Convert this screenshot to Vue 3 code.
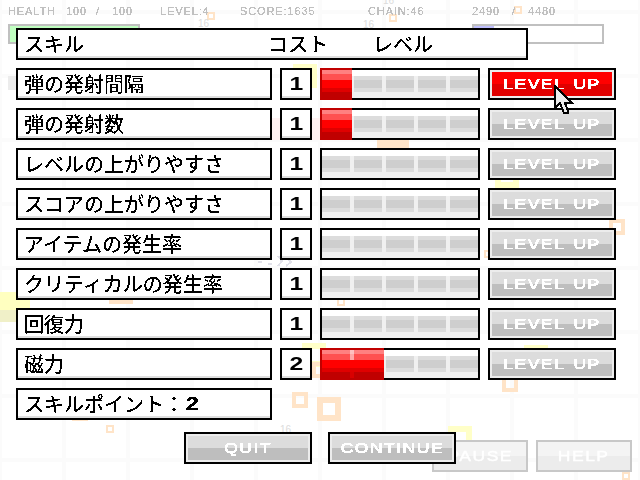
<script setup>
const skills = [
  { name: '弾の発射間隔', cost: 1, level: 1, hover: true },
  { name: '弾の発射数', cost: 1, level: 1 },
  { name: 'レベルの上がりやすさ', cost: 1, level: 0 },
  { name: 'スコアの上がりやすさ', cost: 1, level: 0 },
  { name: 'アイテムの発生率', cost: 1, level: 0 },
  { name: 'クリティカルの発生率', cost: 1, level: 0 },
  { name: '回復力', cost: 1, level: 0 },
  { name: '磁力', cost: 2, level: 2 },
];

// falling items behind the menu: x, y, size, colour
const items = [
  [207, 12, 8, 'o'], [389, 14, 8, 'o'], [514, 6, 8, 'o'],
  [293, 64, 24, 'y'], [377, 116, 32, 'o'], [609, 219, 16, 'o'],
  [484, 250, 8, 'o'], [337, 298, 8, 'o'], [495, 164, 24, 'y'],
  [109, 280, 24, 'o'], [292, 392, 16, 'o'],
  [317, 397, 24, 'o'], [72, 405, 16, 'o'], [106, 425, 8, 'o'],
  [448, 426, 24, 'y'], [622, 472, 8, 'o'], [502, 376, 16, 'o'],
  [302, 343, 24, 'y'], [524, 345, 24, 'y'], [312, 362, 16, 'o'],
];

// score popups left by the shots
const popups = [[280, 425], [363, 20], [383, -4], [198, 19]];

function itemStyle(item) {
  const colors = { o: '#ffe4c8', y: '#ffffc8' };
  return {
    left: item[0] + 'px',
    top: item[1] + 'px',
    width: item[2] + 'px',
    height: item[2] + 'px',
    borderColor: colors[item[3]],
    borderWidth: Math.round(item[2] / 4) + 'px',
  };
}
</script>

<template>
  <div class="screen">
    <svg class="defs" width="0" height="0" aria-hidden="true">
      <filter id="hard" color-interpolation-filters="sRGB" x="0" y="0" width="100%" height="100%">
        <feComponentTransfer>
          <feFuncA type="discrete" tableValues="0 0 1 1 1 1" />
        </feComponentTransfer>
      </filter>
    </svg>

    <!-- the game, paused behind the menu -->
    <div class="game">
      <div v-for="(item, i) in items" :key="i" class="item" :style="itemStyle(item)" />
      <div class="blob" />
      <div class="sprite" />
      <svg class="spark" width="44" height="14" viewBox="0 0 44 14" shape-rendering="crispEdges">
        <path d="M0 8h4M10 10h4M20 2l4 5-4 5M28 3l5 5-5 4M38 2h5v4" fill="none" stroke="#e2e2ea" stroke-width="2" />
      </svg>
      <div class="smear" />
      <span
        v-for="(p, i) in popups"
        :key="'p' + i"
        class="popup"
        :style="{ left: p[0] + 'px', top: p[1] + 'px' }"
      >16</span>
      <div class="hud pixel">
        <span class="hud-a"><i>HEALTH</i></span>
        <span class="hud-b"><i>100</i></span>
        <span class="hud-c"><i>/</i></span>
        <span class="hud-d"><i>100</i></span>
        <span class="hud-e"><i>LEVEL:4</i></span>
        <span class="hud-f"><i>SCORE:1635</i></span>
        <span class="hud-g"><i>CHAIN:46</i></span>
        <span class="hud-h"><i>2490</i></span>
        <span class="hud-c"><i>/</i></span>
        <span class="hud-i"><i>4480</i></span>
      </div>
      <div class="meters">
        <div class="meter"><div class="meter-fill green" /></div>
        <div class="meter"><div class="meter-fill blue" /></div>
      </div>
      <div class="game-buttons">
        <div class="game-btn pixel"><i>PAUSE</i></div>
        <div class="game-btn pixel"><i>HELP</i></div>
      </div>
    </div>

    <div class="menu">
      <div class="panel head">
        <span class="jp h1">スキル</span>
        <span class="jp h2">コスト</span>
        <span class="jp">レベル</span>
      </div>

      <div v-for="skill in skills" :key="skill.name" class="row">
        <div class="panel label"><span class="jp">{{ skill.name }}</span></div>
        <div class="panel cost pixel"><i>{{ skill.cost }}</i></div>
        <div class="bar">
          <div class="track">
            <div v-for="n in 5" :key="n" class="seg" />
          </div>
          <div v-if="skill.level" class="fill" :style="{ width: skill.level * 32 + 'px' }">
            <div v-for="n in skill.level - 1" :key="n" class="sep" :style="{ left: n * 32 - 2 + 'px' }" />
          </div>
        </div>
        <button class="btn" :class="{ hot: skill.hover }">
          <span class="face pixel"><i>LEVEL UP</i></span>
        </button>
      </div>

      <div class="panel label">
        <span class="jp">スキルポイント：</span><span class="pixel points"><i>2</i></span>
      </div>

      <div class="footer">
        <button class="btn"><span class="face pixel"><i>QUIT</i></span></button>
        <button class="btn"><span class="face pixel"><i>CONTINUE</i></span></button>
      </div>
    </div>

    <svg class="cursor" width="20" height="31" viewBox="0 0 20 31" shape-rendering="crispEdges">
      <path d="M1 1V23L6 18L10 28H14V26L11 18H18Z" fill="#ececec" stroke="#000" stroke-width="2" />
    </svg>
  </div>
</template>

<style>
html, body {
  background: #fff;
  overflow: hidden;
}
</style>

<style scoped>
.screen {
  position: relative;
  width: 640px;
  height: 480px;
  overflow: hidden;
  background-color: #fff;
  background-image:
    linear-gradient(90deg, #fbfbfb 4px, transparent 4px),
    linear-gradient(#fbfbfb 4px, transparent 4px);
  background-size: 64px 64px;
  background-position: -2px 0, 0 10px;
}
.defs {
  position: absolute;
}
.game {
  position: absolute;
  inset: 0;
}
.item {
  position: absolute;
  box-sizing: border-box;
  border-style: solid;
}
.blob {
  position: absolute;
  left: 0;
  top: 292px;
  width: 30px;
  height: 30px;
  background: linear-gradient(#ffffc0 60%, #f0f0c8 60%);
}
.sprite {
  position: absolute;
  left: 8px;
  top: 76px;
  width: 8px;
  height: 14px;
  background: #ececec;
}
.spark {
  position: absolute;
  left: 258px;
  top: 254px;
}
.smear {
  position: absolute;
  left: 272px;
  top: 118px;
  width: 48px;
  height: 22px;
  background: #fff2f2;
}
.popup {
  position: absolute;
  font-family: "Liberation Sans", sans-serif;
  font-size: 10px;
  line-height: 10px;
  color: #dcdcdc;
}
.pixel {
  filter: url(#hard);
  font-family: "Liberation Sans", sans-serif;
}
.pixel i {
  display: inline-block;
  font-style: normal;
  white-space: pre;
}

.hud {
  display: flex;
  padding: 5px 0 0 8px;
  font-size: 10px;
  line-height: 14px;
  color: #c0c0c0;
}
.hud i {
  letter-spacing: 0.8px;
  transform: scaleX(1.1);
  transform-origin: left;
}
.hud-a { width: 58px; }
.hud-b { width: 30px; }
.hud-c { width: 16px; }
.hud-d { width: 48px; }
.hud-e { width: 80px; }
.hud-f { width: 128px; }
.hud-g { width: 104px; }
.hud-h { width: 40px; }

.meters {
  display: flex;
  justify-content: space-between;
  padding: 5px 36px 0 8px;
}
.meter {
  box-sizing: border-box;
  width: 132px;
  height: 20px;
  border: 2px solid #c0c0c0;
  background: #fff;
}
.meter-fill {
  height: 100%;
}
.green {
  background: #c0ffc0;
}
.blue {
  width: 20px;
  height: 3px;
  background: #c0c0ff;
}
.game-buttons {
  position: absolute;
  left: 432px;
  top: 440px;
  display: flex;
  gap: 8px;
}
.game-btn {
  box-sizing: border-box;
  width: 96px;
  height: 32px;
  border: 2px solid #c8c8c8;
  background: linear-gradient(#f4f4f4 50%, #ececec 50%);
  display: flex;
  align-items: center;
  justify-content: center;
  font-size: 14px;
  color: #fff;
}
.game-btn i {
  letter-spacing: 1.2px;
  transform: scaleX(1.25);
  -webkit-text-stroke: 0.4px #fff;
}

.menu {
  position: relative;
  display: flex;
  flex-direction: column;
  gap: 8px;
  padding: 28px 0 0 16px;
}
.row {
  display: flex;
  gap: 8px;
}
.panel {
  box-sizing: border-box;
  height: 32px;
  border: 2px solid #000;
  background: #fff;
  box-shadow: inset 0 -2px 0 #e0e0e0;
  display: flex;
  align-items: center;
}
.jp {
  font-family: "Noto Sans CJK JP", sans-serif;
  font-size: 20px;
  line-height: 28px;
  color: #000;
  white-space: nowrap;
  filter: url(#hard);
}
.head {
  width: 512px;
  padding-left: 6px;
}
.h1 {
  width: 244px;
}
.h2 {
  width: 105px;
}
.label {
  width: 256px;
  padding-left: 6px;
}
.cost {
  width: 32px;
  justify-content: center;
  font-size: 19px;
  font-weight: bold;
  color: #000;
}
.cost i {
  transform: scaleX(1.3);
}
.points {
  font-size: 19px;
  font-weight: bold;
  margin-left: 3px;
}
.points i {
  transform: scaleX(1.3);
}

.bar {
  position: relative;
  box-sizing: border-box;
  width: 160px;
  height: 32px;
  border: 2px solid #000;
  background: linear-gradient(#fff 6px, #f0f0f0 6px);
}
.track {
  display: flex;
  gap: 4px;
  margin-top: 6px;
}
.seg {
  width: 28px;
  height: 16px;
  background: linear-gradient(#dcdcdc 4px, #cecece 4px, #cecece 12px, #dcdcdc 12px);
}
.fill {
  position: absolute;
  left: -2px;
  top: -2px;
  height: 32px;
  background: linear-gradient(
    #c00000 2px,
    #ff8080 2px, #ff8080 6px,
    #ff5050 6px, #ff5050 12px,
    #ff0000 12px, #ff0000 20px,
    #e00000 20px, #e00000 24px,
    #c00000 24px
  );
  box-shadow: inset 2px 0 0 #c00000;
}
.sep {
  position: absolute;
  top: 2px;
  width: 4px;
  height: 28px;
  background: linear-gradient(rgba(255, 255, 255, 0.5) 10px, transparent 10px, transparent 22px, rgba(255, 0, 0, 0.4) 22px);
}

.btn {
  box-sizing: border-box;
  display: block;
  width: 128px;
  height: 32px;
  padding: 2px;
  margin: 0;
  border: 2px solid #000;
  background: #ececec;
}
.face {
  display: flex;
  align-items: center;
  justify-content: center;
  height: 24px;
  padding-bottom: 1px;
  box-sizing: border-box;
  background: linear-gradient(#dcdcdc 50%, #bebebe 50%);
  font-size: 14px;
  color: #fff;
  filter: none;
}
.face i {
  letter-spacing: 1.2px;
  word-spacing: 2px;
  transform: scaleX(1.25);
  -webkit-text-stroke: 0.4px #fff;
  filter: url(#hard);
}
.hot .face {
  background: linear-gradient(#ff0000 50%, #e00000 50%);
}
.footer {
  display: flex;
  gap: 16px;
  padding: 4px 0 0 168px;
}
.cursor {
  position: absolute;
  left: 554px;
  top: 85px;
}
</style>
